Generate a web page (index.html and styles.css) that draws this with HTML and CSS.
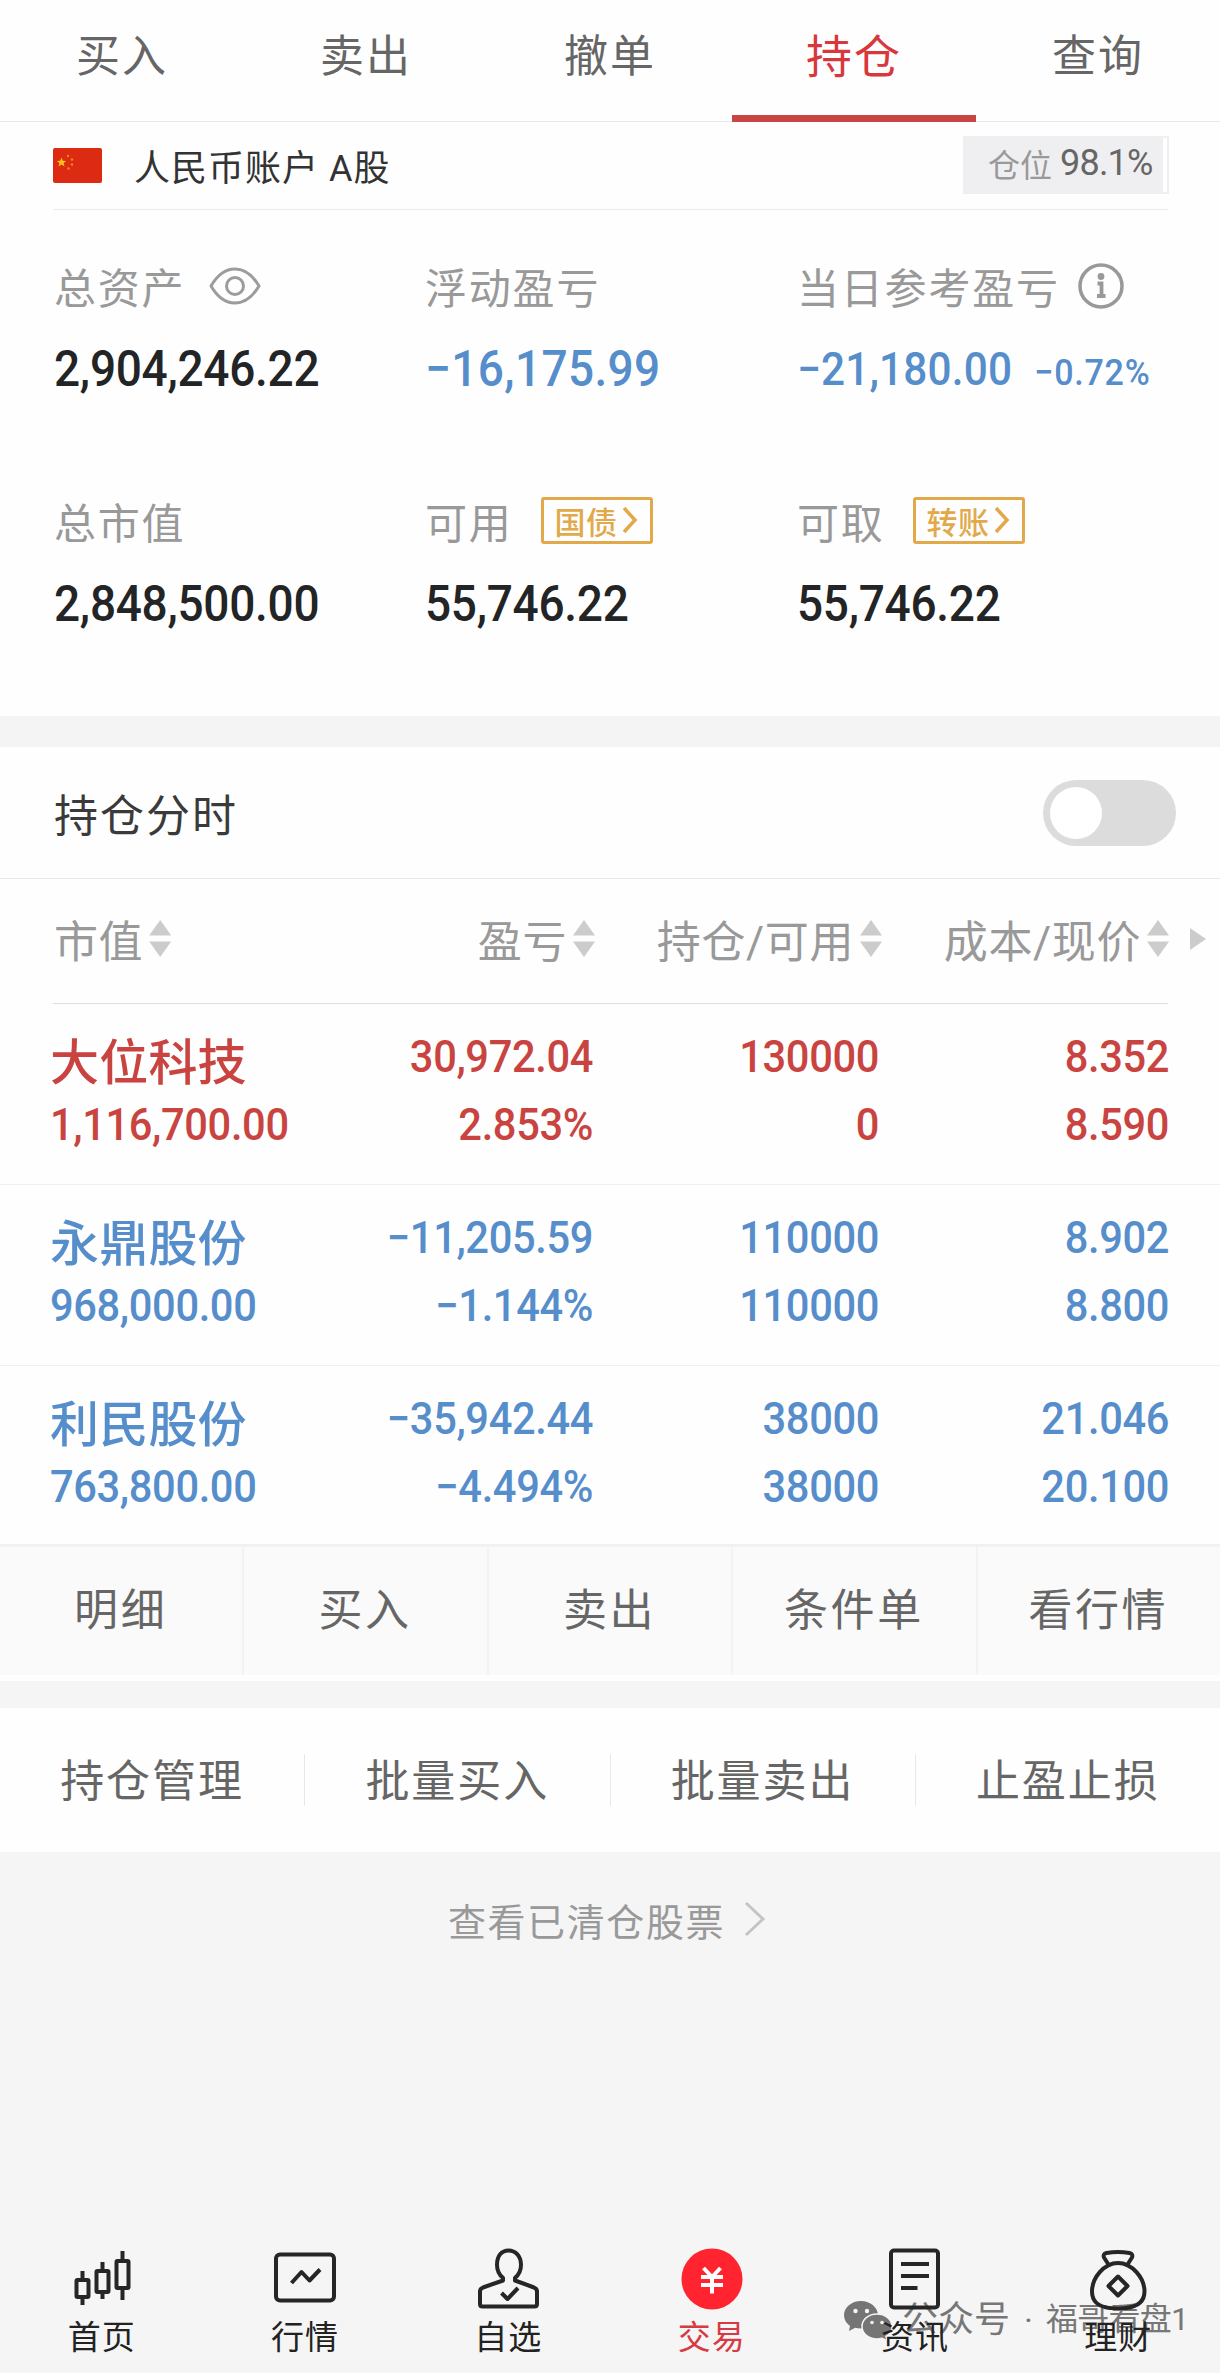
FILE: index.html
```html
<!DOCTYPE html>
<html lang="zh-CN">
<head>
  <meta charset="UTF-8" />
  <meta name="viewport" content="width=device-width, initial-scale=1" />
  <title>持仓</title>
  <link rel="stylesheet" href="styles.css">
</head>
<body>

  <!-- Top Tabs -->
  <div class="tabs">
    <div class="tab">买入</div>
    <div class="tab">卖出</div>
    <div class="tab">撤单</div>
    <div class="tab active">持仓</div>
    <div class="tab">查询</div>
  </div>

  <!-- Account -->
  <div class="account">
    <svg class="flag" width="49" height="35" viewBox="0 0 49 35">
      <rect width="49" height="35" rx="2" fill="#dd2a12" />
      <path d="M8.500 9.500l1.300 3.200 3.400.2-2.600 2.200.9 3.400-3-1.900-3 1.900.9-3.400-2.600-2.200 3.400-.2z" fill="#ffc21a" />
      <g fill="#f08a1c">
        <circle cx="15" cy="8" r="1.200" />
        <circle cx="19" cy="11.500" r="1.200" />
        <circle cx="19" cy="16.500" r="1.200" />
        <circle cx="15.500" cy="20.500" r="1.200" />
      </g>
    </svg>
    <span class="account-name">人民币账户 A股</span>
    <div class="ratio"><span class="ratio-label">仓位</span><span class="ratio-num">98.1%</span></div>
  </div>

  <!-- Summary -->
  <div class="summary">
    <div class="cell">
      <div class="label">总资产
        <svg class="eye" width="52" height="38" viewBox="0 0 52 38" fill="none" stroke="#9c9c9c" stroke-width="3">
          <path d="M2 19C9 7 17 2 26 2s17 5 24 17c-7 12-15 17-24 17S9 31 2 19z" stroke-linejoin="round" />
          <circle cx="26" cy="19" r="8.500" />
        </svg>
      </div>
      <div class="value">2,904,246.22</div>
    </div>
    <div class="cell">
      <div class="label">浮动盈亏</div>
      <div class="value blue">−16,175.99</div>
    </div>
    <div class="cell">
      <div class="label">当日参考盈亏
        <svg class="info" width="46" height="46" viewBox="0 0 46 46">
          <circle cx="23" cy="23" r="21" fill="none" stroke="#999" stroke-width="3.500" />
          <circle cx="23" cy="13.500" r="3.400" fill="#999" />
          <path d="M19.500 20.500h4V33M19 33h8.500" fill="none" stroke="#999" stroke-width="3.800" />
        </svg>
      </div>
      <div class="value blue daily">−21,180.00<span class="percent">−0.72%</span></div>
    </div>
    <div class="cell">
      <div class="label">总市值</div>
      <div class="value">2,848,500.00</div>
    </div>
    <div class="cell">
      <div class="label">可用
        <span class="link-btn">国债<svg width="18" height="32" viewBox="0 0 18 32"><path d="M3 4l11 12L3 28" /></svg></span>
      </div>
      <div class="value">55,746.22</div>
    </div>
    <div class="cell">
      <div class="label">可取
        <span class="link-btn">转账<svg width="18" height="32" viewBox="0 0 18 32"><path d="M3 4l11 12L3 28" /></svg></span>
      </div>
      <div class="value">55,746.22</div>
    </div>
  </div>

  <!-- Time Chart Switch -->
  <div class="switch-row">
    <span>持仓分时</span>
    <div class="switch"><div class="knob"></div></div>
  </div>

  <!-- Positions -->
  <div class="table-head">
    <div class="col c1">市值<span class="sort"></span></div>
    <div class="col c2">盈亏<span class="sort"></span></div>
    <div class="col c3">持仓/可用<span class="sort"></span></div>
    <div class="col c4">成本/现价<span class="sort"></span></div>
    <span class="more"></span>
  </div>

  <div class="stock red">
    <div class="col c1"><b>大位科技</b><span>1,116,700.00</span></div>
    <div class="col c2"><span>30,972.04</span><span>2.853%</span></div>
    <div class="col c3"><span>130000</span><span>0</span></div>
    <div class="col c4"><span>8.352</span><span>8.590</span></div>
  </div>
  <div class="stock blue">
    <div class="col c1"><b>永鼎股份</b><span>968,000.00</span></div>
    <div class="col c2"><span>−11,205.59</span><span>−1.144%</span></div>
    <div class="col c3"><span>110000</span><span>110000</span></div>
    <div class="col c4"><span>8.902</span><span>8.800</span></div>
  </div>
  <div class="stock blue last">
    <div class="col c1"><b>利民股份</b><span>763,800.00</span></div>
    <div class="col c2"><span>−35,942.44</span><span>−4.494%</span></div>
    <div class="col c3"><span>38000</span><span>38000</span></div>
    <div class="col c4"><span>21.046</span><span>20.100</span></div>
  </div>

  <div class="actions">
    <div>明细</div>
    <div>买入</div>
    <div>卖出</div>
    <div>条件单</div>
    <div>看行情</div>
  </div>

  <div class="batch">
    <div>持仓管理</div>
    <div>批量买入</div>
    <div>批量卖出</div>
    <div>止盈止损</div>
  </div>

  <div class="cleared">查看已清仓股票
    <svg width="22" height="36" viewBox="0 0 22 36" fill="none" stroke="#c4c4c4" stroke-width="3"><path d="M2 2l17 16L2 34" /></svg>
  </div>

  <!-- Bottom Nav -->
  <div class="footer">
    <div class="watermark">
      <svg width="48" height="39" viewBox="0 0 48 39">
        <path d="M17 0C7.500 0 0 6.300 0 14.200c0 4.300 2.300 8.100 6 10.700L5 30l6.200-3.200c1.800.5 3.700.8 5.800.8 9.500 0 17-6 17-13.400S26.500 0 17 0z" fill="#757575" />
        <path d="M33 13c-8.500 0-15 5.600-15 12.500S24.500 38 33 38c1.800 0 3.500-.3 5-.7l5 2.400-1-4.200c3.700-2.300 6-5.900 6-10C48 18.600 41.500 13 33 13z" fill="#757575" stroke="#f5f5f5" stroke-width="1.500" />
        <g fill="#f5f5f5">
          <circle cx="11.500" cy="10" r="2.200" />
          <circle cx="23" cy="10" r="2.200" />
          <circle cx="28" cy="21.500" r="1.800" />
          <circle cx="38" cy="21.500" r="1.800" />
        </g>
      </svg>
      <span class="wm-type">公众号</span><span class="wm-dot">·</span><span class="wm-name">福哥看盘1</span>
    </div>
    <div class="nav">
      <div class="nav-item">
        <svg width="62" height="62" viewBox="0 0 62 62">
          <path d="M11.500 23v9M11.500 50v7M31.500 14v9M31.500 45v6M51.500 3v9M51.500 41v11" />
          <rect x="5.500" y="32" width="12" height="17" rx="1" />
          <rect x="25.500" y="23" width="12" height="21" rx="1" />
          <rect x="45.500" y="13" width="12" height="27" rx="1" />
        </svg>
        <span>首页</span>
      </div>
      <div class="nav-item">
        <svg width="62" height="62" viewBox="0 0 62 62">
          <rect x="2" y="6.500" width="58" height="46" rx="4" />
          <path d="M17.500 35l10-11 8 8.500L46 21.500" />
        </svg>
        <span>行情</span>
      </div>
      <div class="nav-item">
        <svg width="62" height="62" viewBox="0 0 62 62">
          <path d="M26 32.500v-2.700c-4-3-6-7.300-6-13C20 8 24.500 2.500 31.500 2.500S44 8 44 16.800c0 5.700-2 10-6 13v2.700l19 7q3 1.200 3 4v12.500q0 2.500-2.500 2.500h-52q-2.500 0-2.500-2.500V43.500q0-2.800 3-4z" />
          <path d="M24.500 45l6 6 10.500-11" />
        </svg>
        <span>自选</span>
      </div>
      <div class="nav-item current">
        <svg width="62" height="62" viewBox="0 0 62 62">
          <circle cx="31" cy="31" r="30.500" class="coin" />
          <path class="yen" d="M22.500 20l8.500 9 8.500-9M31 29v16.500M20 29h22M20 37h22" />
        </svg>
        <span>交易</span>
      </div>
      <div class="nav-item">
        <svg width="62" height="62" viewBox="0 0 62 62">
          <rect x="7" y="2.500" width="47" height="57" rx="3" />
          <path d="M17 16h28M17 28h28M17 40h16.500" />
        </svg>
        <span>资讯</span>
      </div>
      <div class="nav-item">
        <svg width="62" height="62" viewBox="0 0 62 62">
          <path d="M21.500 16.500l-4.500-7q-1.500-3.500 2.500-4.500 11.500-2 23 0 4 1 2.500 4.500l-4.500 7" />
          <path d="M31 15C17 15 5 30 5 43.500 5 55 13 60.500 31 60.500S57.500 55 57.500 43.500C57.500 30 45 15 31 15z" />
          <path d="M31 28.500l9.500 9.500-9.500 9.500-9.500-9.500z" />
        </svg>
        <span>理财</span>
      </div>
    </div>
  </div>

</body>
</html>
```

FILE: styles.css
```css
body {
  margin: 0;
  width: 1220px;
  height: 2373px;
  display: flex;
  flex-direction: column;
  background-color: #f5f5f5;
  font-family: Roboto, "Noto Sans CJK SC", sans-serif;
  color: #666;
  font-size: 44px;
  letter-spacing: 2px;
  overflow: hidden;
}

div, svg {
  box-sizing: border-box;
  flex-shrink: 0;
}

/* tabs */
.tabs {
  height: 122px;
  display: flex;
  background: #fefefe;
  border-bottom: 1px solid #e8e8e8;
}

.tab {
  flex: 1;
  height: 122px;
  line-height: 115px;
  text-align: center;
}

.tab.active {
  color: #d8383c;
  font-size: 46px;
  border-bottom: 7px solid #c94444;
}

/* account */
.account {
  height: 88px;
  padding: 0 51px 0 53px;
  display: flex;
  align-items: center;
  background: linear-gradient(#ececec, #ececec) 53px 87px / 1115px 1px no-repeat #fefefe;
}

.flag {
  margin-bottom: 2px;
}

.account-name {
  margin: 0 0 3px 32px;
  font-size: 36px;
  letter-spacing: 1px;
  color: #333;
}

.ratio {
  margin: 0 0 3px auto;
  width: 206px;
  height: 58px;
  padding: 0 0 3px 25px;
  display: flex;
  align-items: center;
  background: linear-gradient(#fff, #fff) 200px 2px / 4px 54px no-repeat #efeff1;
  letter-spacing: 0;
}

.ratio-label {
  font-size: 32px;
  color: #999;
}

.ratio-num {
  margin-left: 8px;
  font-size: 36px;
  letter-spacing: -0.8px;
}

/* summary */
.summary {
  height: 506px;
  padding: 36px 0 0 54px;
  display: grid;
  grid-template-columns: 371px 372px 1fr;
  grid-template-rows: 235px 235px;
  background: #fefefe;
}

.label {
  height: 78px;
  display: flex;
  align-items: center;
  font-size: 42px;
  letter-spacing: 1.8px;
  color: #999;
}

/* numbers are drawn slightly condensed */
.value {
  height: 90px;
  line-height: 90px;
  font-size: 50px;
  font-weight: 500;
  letter-spacing: -0.3px;
  color: #222426;
  transform: scaleX(0.92);
  transform-origin: left;
}

.value.blue {
  letter-spacing: 0.4px;
}

.eye {
  margin: 2px 0 0 24px;
}

.info {
  margin: 2px 0 0 18px;
}

.value.daily {
  font-size: 46px;
  letter-spacing: 0.2px;
}

.percent {
  margin-left: 24px;
  font-size: 37px;
  letter-spacing: 0.8px;
}

.link-btn {
  width: 112px;
  height: 47px;
  margin-left: 28px;
  box-sizing: border-box;
  display: flex;
  align-items: center;
  justify-content: center;
  border: 3px solid #e2a94a;
  border-radius: 3px;
  font-size: 31px;
  font-weight: 500;
  letter-spacing: 0.5px;
  color: #e2a94a;
}

.link-btn svg {
  margin-left: 3px;
  fill: none;
  stroke: #e2a94a;
  stroke-width: 3.5;
}

/* colors */
.red {
  color: #c94440;
}

.blue, .value.blue {
  color: #568dcb;
}

/* switch */
.switch-row {
  height: 163px;
  padding: 0 44px 0 54px;
  display: flex;
  align-items: center;
  justify-content: space-between;
  border-top: 31px solid #f4f4f4;
  border-bottom: 1px solid #e8e8e8;
  background: #fefefe;
  color: #3a3a3a;
}

.switch {
  width: 133px;
  height: 66px;
  padding: 7px;
  border-radius: 33px;
  background: #dcdcdc;
}

.knob {
  width: 52px;
  height: 52px;
  border-radius: 50%;
  background: #fff;
}

/* positions */
.table-head, .stock {
  display: flex;
  background: #fefefe;
}

.table-head {
  height: 125px;
  padding: 0 0 6px 54px;
  align-items: center;
  letter-spacing: 0.6px;
  color: #999;
  background: linear-gradient(#dedede, #dedede) 53px 124px / 1115px 1px no-repeat #fefefe;
}

.table-head .col {
  display: flex;
  align-items: center;
}

.c1 {
  width: 250px;
}

.c2 {
  width: 291px;
  justify-content: flex-end;
  text-align: right;
}

.c3 {
  width: 287px;
  justify-content: flex-end;
  text-align: right;
}

.c4 {
  width: 287px;
  justify-content: flex-end;
  text-align: right;
}

.sort {
  width: 22px;
  height: 37px;
  margin: 0 0 0 6px;
  background: #ccc;
  clip-path: polygon(50% 0, 100% 42%, 0 42%, 50% 0, 50% 100%, 0 58%, 100% 58%, 50% 100%);
}

.more {
  margin: 0 0 0 21px;
  border-left: 16px solid #ccc;
  border-top: 11px solid transparent;
  border-bottom: 11px solid transparent;
}

.stock {
  height: 181px;
  padding: 19px 0 0 50px;
  border-bottom: 1px solid #f0f0f0;
  font-size: 45px;
  font-weight: 500;
  letter-spacing: -0.4px;
}

.stock .col {
  display: flex;
  flex-direction: column;
  justify-content: flex-start;
}

.stock .c2 {
  width: 293px;
}

.stock .c3 {
  width: 286px;
}

.stock .c4 {
  width: 290px;
}

.stock span, .stock b {
  height: 68px;
  line-height: 68px;
}

.stock span {
  transform: scaleX(0.925);
  transform-origin: right;
}

.stock .c1 span {
  transform-origin: left;
}

.stock b {
  font-size: 49px;
  font-weight: 500;
  letter-spacing: 0.2px;
  line-height: 81px;
}

.stock.last {
  height: 179px;
}

/* buttons under the list */
.actions {
  height: 136px;
  display: flex;
  background: #fafafa;
  border-top: 2px solid #f2f2f2;
  border-bottom: 6px solid #fefefe;
}

.actions div {
  flex: 1;
  padding-right: 1px;
  line-height: 129px;
  text-align: center;
  letter-spacing: 2.6px;
  border-right: 2px solid #f3f3f3;
}

.actions div:last-child {
  border-right: none;
}

.batch {
  height: 144px;
  margin-top: 27px;
  display: flex;
  align-items: center;
  background: #fefefe;
}

.batch div {
  flex: 1;
  height: 52px;
  line-height: 56px;
  text-align: center;
  border-right: 1px solid #e8e8e8;
}

.batch div:last-child {
  border-right: none;
}

.cleared {
  height: 134px;
  padding-right: 6px;
  display: flex;
  align-items: center;
  justify-content: center;
  font-size: 38px;
  letter-spacing: 1.6px;
  color: #999;
}

.cleared svg {
  margin-left: 19px;
}

/* bottom nav */
.footer {
  position: relative;
  margin-top: auto;
  height: 125px;
}

.nav {
  position: relative;
  display: flex;
}

.nav-item {
  flex: 1;
  display: flex;
  flex-direction: column;
  align-items: center;
  font-size: 33px;
  letter-spacing: 1px;
  color: #222;
}

.nav-item svg {
  fill: none;
  stroke: #262626;
  stroke-width: 4;
  stroke-linejoin: round;
}

.nav-item span {
  height: 54px;
  line-height: 55px;
}

.nav-item.current {
  color: #d83a44;
}

.nav-item .coin {
  fill: #ff2430;
  stroke: none;
}

.nav-item .yen {
  stroke: #fff;
}

/* account mark lies under the nav */
.watermark {
  position: absolute;
  left: 844px;
  top: 49px;
  display: flex;
  align-items: center;
  line-height: 44px;
  color: #777;
  letter-spacing: 0;
  white-space: nowrap;
}

.wm-type {
  margin-left: 10px;
  font-size: 36px;
}

.wm-dot {
  margin: 0 13px 0 14px;
  font-size: 34px;
}

.wm-name {
  padding-bottom: 2px;
  font-size: 32px;
  letter-spacing: -0.7px;
}
```
